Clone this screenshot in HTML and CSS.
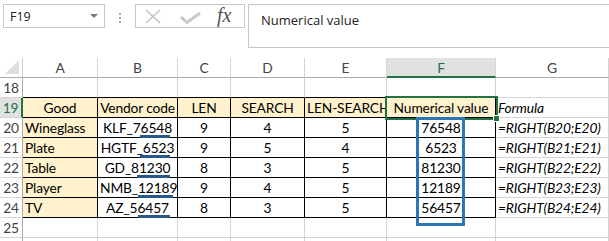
FILE: index.html
```html
<!DOCTYPE html>
<html lang="en">
<head>
    <meta charset="UTF-8">
    <title>Numerical value</title>
    <link rel="stylesheet" href="styles.css">
</head>
<body>
    <!-- Formula bar -->
    <div class="toolbar">
        <div class="namebox">
            <span>F19</span>
            <span class="caret"></span>
        </div>
        <div class="grip"><i></i><i></i><i></i></div>
        <div class="buttons">
            <svg class="icon-x" width="16" height="15" viewBox="0 0 16 15">
                <path d="M1 1 L15 14 M15 1 L1 14" stroke="#c4c4c4" stroke-width="1.6" fill="none"/>
            </svg>
            <svg class="icon-ok" width="21" height="12" viewBox="0 0 21 12">
                <path d="M1 5 L7 10.5 L20 1" stroke="#c8c8c8" stroke-width="3" fill="none"/>
            </svg>
            <span class="fx">fx</span>
        </div>
        <div class="formula">Numerical value</div>
    </div>

    <!-- Sheet -->
    <div class="sheet">
        <div class="corner"><span class="tri"></span></div>
        <div class="col">A</div>
        <div class="col">B</div>
        <div class="col">C</div>
        <div class="col">D</div>
        <div class="col">E</div>
        <div class="col active">F</div>
        <div class="col">G</div>

        <div class="row">18</div>
        <div class="cell top"></div><div class="cell top"></div><div class="cell top"></div>
        <div class="cell top"></div><div class="cell top"></div><div class="cell top"></div>
        <div class="cell"></div>

        <div class="row active">19</div>
        <div class="cell t head c">Good</div>
        <div class="cell t head c">Vendor code</div>
        <div class="cell t head c">LEN</div>
        <div class="cell t head c">SEARCH</div>
        <div class="cell t head c">LEN-SEARCH</div>
        <div class="cell t head c selected">Numerical value<span class="handle"></span></div>
        <div class="cell i">Formula</div>

        <div class="row">20</div>
        <div class="cell t head">Wineglass</div>
        <div class="cell t c">KLF_76548<span class="mark" style="left:42px;width:30px"></span></div>
        <div class="cell t c">9</div>
        <div class="cell t c">4</div>
        <div class="cell t c">5</div>
        <div class="cell t c">76548<span class="frame"></span></div>
        <div class="cell i">=RIGHT(B20;E20)</div>

        <div class="row">21</div>
        <div class="cell t head">Plate</div>
        <div class="cell t c">HGTF_6523<span class="mark" style="left:42px;width:30px"></span></div>
        <div class="cell t c">9</div>
        <div class="cell t c">5</div>
        <div class="cell t c">4</div>
        <div class="cell t c">6523</div>
        <div class="cell i">=RIGHT(B21;E21)</div>

        <div class="row">22</div>
        <div class="cell t head">Table</div>
        <div class="cell t c">GD_81230<span class="mark" style="left:39px;width:33px"></span></div>
        <div class="cell t c">8</div>
        <div class="cell t c">3</div>
        <div class="cell t c">5</div>
        <div class="cell t c">81230</div>
        <div class="cell i">=RIGHT(B22;E22)</div>

        <div class="row">23</div>
        <div class="cell t head">Player</div>
        <div class="cell t c">NMB_12189<span class="mark" style="left:40px;width:35px"></span></div>
        <div class="cell t c">9</div>
        <div class="cell t c">4</div>
        <div class="cell t c">5</div>
        <div class="cell t c">12189</div>
        <div class="cell i">=RIGHT(B23;E23)</div>

        <div class="row">24</div>
        <div class="cell t head">TV</div>
        <div class="cell t c">AZ_56457<span class="mark" style="left:40px;width:32px"></span></div>
        <div class="cell t c">8</div>
        <div class="cell t c">3</div>
        <div class="cell t c">5</div>
        <div class="cell t c">56457</div>
        <div class="cell i">=RIGHT(B24;E24)</div>

        <div class="row">25</div>
        <div class="cell"></div><div class="cell"></div><div class="cell"></div>
        <div class="cell"></div><div class="cell"></div><div class="cell"></div>
        <div class="cell"></div>

        <div class="row"></div>
        <div class="cell"></div><div class="cell"></div><div class="cell"></div>
        <div class="cell"></div><div class="cell"></div><div class="cell"></div>
        <div class="cell"></div>
    </div>
</body>
</html>
```

FILE: styles.css
```css
body {
    margin: 0;
    background: #fff;
    font-family: Lato, "Liberation Sans", sans-serif;
    overflow: hidden;
}

/* ---- formula bar ---- */
.toolbar {
    display: flex;
    align-items: flex-start;
    height: 48px;
    padding: 4px 0 0 3px;
    box-sizing: border-box;
}

.namebox {
    width: 102px;
    height: 24px;
    box-sizing: border-box;
    border: 1px solid #c6c6c6;
    display: flex;
    align-items: center;
    justify-content: space-between;
    padding: 0 6px 0 6px;
    font-family: "Open Sans", sans-serif;
    font-size: 12.5px;
    color: #222;
}

.caret {
    width: 0;
    height: 0;
    border-left: 4px solid transparent;
    border-right: 4px solid transparent;
    border-top: 4px solid #777;
}

.grip {
    width: 30px;
    display: flex;
    flex-direction: column;
    align-items: center;
    gap: 2px;
    padding-top: 9px;
}

.grip i {
    width: 2px;
    height: 2px;
    background: #a6a6a6;
}

.buttons {
    width: 110px;
    height: 24px;
    box-sizing: border-box;
    border: 1px solid #c6c6c6;
    display: flex;
    align-items: center;
    padding-left: 9px;
}

.icon-x {
    margin-right: 19px;
}

.icon-ok {
    margin-top: 3px;
    margin-right: 16px;
}

.fx {
    font-family: "Liberation Serif", serif;
    font-style: italic;
    font-size: 20px;
    color: #555;
    line-height: 20px;
    margin-top: -2px;
}

.formula {
    margin-left: 3px;
    flex: 1;
    height: 44px;
    box-sizing: border-box;
    border: 1px solid #c6c6c6;
    border-right: none;
    padding: 6px 0 0 12px;
    font-family: "Open Sans", sans-serif;
    font-size: 13px;
    color: #222;
}

/* ---- grid ---- */
.sheet {
    margin-top: 10px;
    display: grid;
    grid-template-columns: 23px 75px 80px 53px 74px 82px 109px 113px;
    grid-auto-rows: 20px;
    font-size: 13.8px;
    letter-spacing: -0.15px;
    color: #000;
}

.sheet > div {
    box-sizing: border-box;
    border-right: 1px solid #d4d4d4;
    border-bottom: 1px solid #d4d4d4;
    line-height: 20px;
    white-space: nowrap;
    overflow: visible;
}

.corner {
    position: relative;
    border-bottom-color: #ababab !important;
}

.corner .tri {
    position: absolute;
    right: 3px;
    bottom: 3px;
    width: 0;
    height: 0;
    border-left: 14px solid transparent;
    border-bottom: 14px solid #dfdfdf;
}

.col {
    text-align: center;
    color: #444;
    border-bottom-color: #ababab !important;
}

.col.active {
    background: #e1e1e1;
    color: #217346;
    border-bottom: 2px solid #217346 !important;
}

.row {
    text-align: center;
    color: #444;
    border-right-color: #ababab !important;
}

.row.active {
    background: #e1e1e1;
    color: #217346;
    border-right: 2px solid #217346 !important;
}

.cell {
    padding: 0 2px;
}

.cell.top {
    border-bottom-color: #000;
}

.cell.t {
    border-right-color: #000;
    border-bottom-color: #000;
}

.head {
    background: #fff2cc;
}

.c {
    text-align: center;
}

.i {
    font-style: italic;
    padding-left: 2px;
}

.selected {
    position: relative;
    outline: 2px solid #217346;
    outline-offset: 0;
    z-index: 1;
}

.handle {
    position: absolute;
    right: -5px;
    bottom: -5px;
    width: 5px;
    height: 5px;
    background: #217346;
    border: 1px solid #fff;
}

/* hand-drawn marks */
.sheet .t {
    position: relative;
}

.mark {
    position: absolute;
    top: 17px;
    height: 3px;
    background: #27588a;
    z-index: 2;
}

.frame {
    position: absolute;
    left: 29px;
    top: -1px;
    width: 49px;
    height: 109px;
    box-sizing: border-box;
    border: 3px solid #2e75b6;
    z-index: 3;
}
```
